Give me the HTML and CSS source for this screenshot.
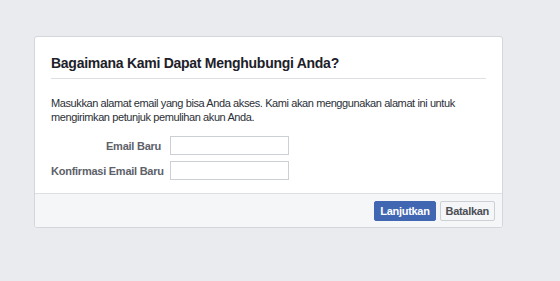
FILE: index.html
```html
<!DOCTYPE html>
<html>
<head>
<meta charset="utf-8">
<link rel="stylesheet" href="styles.css">
</head>
<body>
<div class="page">
  <div class="card">
    <div class="head">
      <h2 class="title">Bagaimana Kami Dapat Menghubungi Anda?</h2>
    </div>
    <div class="body">
      <p class="desc">Masukkan alamat email yang bisa Anda akses. Kami akan menggunakan alamat ini untuk mengirimkan petunjuk pemulihan akun Anda.</p>
      <div class="form">
        <label class="lbl">Email Baru</label>
        <input class="inp" type="text">
        <label class="lbl">Konfirmasi Email Baru</label>
        <input class="inp" type="text">
      </div>
    </div>
    <div class="foot">
      <button class="btn primary">Lanjutkan</button>
      <button class="btn">Batalkan</button>
    </div>
  </div>
</div>
</body>
</html>
```
FILE: styles.css
```css
html, body {
  margin: 0;
  padding: 0;
  background: #e9ebee;
  font-family: "Liberation Sans", Arial, sans-serif;
}
.page {
  padding: 36px 0 0 34px;
}
.card {
  width: 467px;
  background: #fff;
  border: 1px solid #d3d6db;
  border-radius: 3px;
  overflow: hidden;
}
.head {
  margin: 0 16px;
  padding: 17px 0 6px;
  border-bottom: 1px solid #dddfe2;
}
.title {
  margin: 0;
  font-size: 14px;
  font-weight: bold;
  color: #1d2129;
  line-height: 18px;
  letter-spacing: -0.27px;
}
.body {
  padding: 17px 16px 13px;
}
.desc {
  margin: 0 0 12px;
  font-size: 11px;
  line-height: 14px;
  letter-spacing: -0.4px;
  color: #2b2f36;
}
.form {
  display: grid;
  grid-template-columns: 110px 119px;
  column-gap: 9px;
  row-gap: 6px;
  align-items: center;
}
.lbl {
  text-align: right;
  white-space: nowrap;
  font-size: 11px;
  font-weight: bold;
  letter-spacing: -0.25px;
  color: #5d6169;
}
.inp {
  box-sizing: border-box;
  width: 119px;
  height: 19px;
  margin: 0;
  border: 1px solid #ccd0d5;
  padding: 2px 3px;
}
.foot {
  background: #f5f6f7;
  border-top: 1px solid #dddfe2;
  padding: 7px 7px 6px 0;
  display: flex;
  justify-content: flex-end;
  gap: 4px;
}
.btn {
  font-family: "Liberation Sans", Arial, sans-serif;
  font-size: 11px;
  font-weight: bold;
  letter-spacing: -0.3px;
  height: 20px;
  line-height: 18px;
  padding: 0 5px;
  border: 1px solid #ccd0d5;
  background: #f5f6f7;
  color: #4b4f56;
  border-radius: 2px;
  margin: 0;
}
.btn.primary {
  background: #4267b2;
  border-color: #4267b2;
  color: #fff;
}
```
